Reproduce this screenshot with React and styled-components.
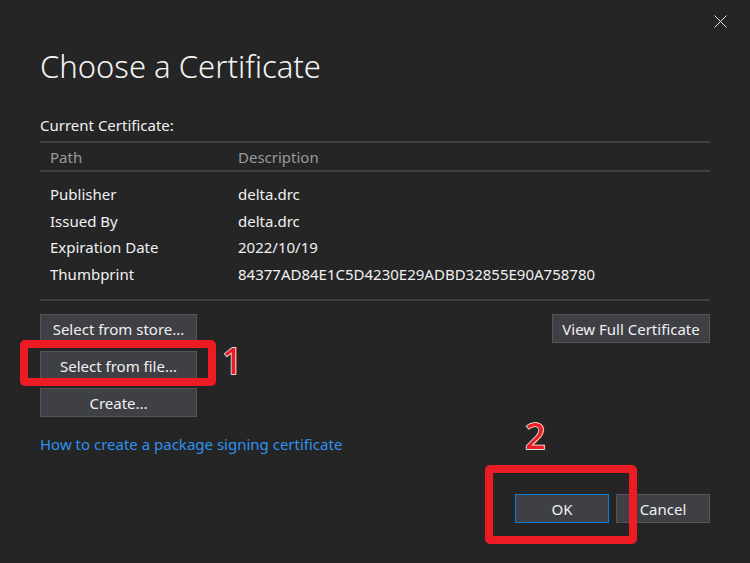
import styled, { createGlobalStyle } from 'styled-components';

const GlobalStyle = createGlobalStyle`
  html, body {
    margin: 0;
    padding: 0;
    background: #252526;
  }
  * { box-sizing: border-box; }
`;

const Dialog = styled.div`
  position: relative;
  width: 750px;
  height: 563px;
  background: #252526;
  color: #f1f1f1;
  font-family: "Segoe UI", "Noto Sans", "Liberation Sans", sans-serif;
  font-size: 15px;
  padding: 0 40px;
  display: flex;
  flex-direction: column;
  overflow: hidden;
`;

const TopBar = styled.div`
  height: 42px;
  display: flex;
  justify-content: flex-end;
  align-items: flex-start;
  margin-right: -18px;
  padding-top: 13px;
`;

const CloseButton = styled.button`
  width: 16px;
  height: 16px;
  padding: 0;
  border: 0;
  background: transparent;
  display: flex;
  align-items: center;
  justify-content: center;
  cursor: pointer;
`;

const Title = styled.h1`
  margin: 0;
  font-size: 31px;
  font-weight: 300;
  line-height: 48px;
  color: #f4f4f4;
`;

const Label = styled.div`
  margin-top: 25px;
  line-height: 20px;
`;

const Table = styled.div`
  margin-top: 6px;
  border-top: 2px solid #3f3f46;
  border-bottom: 2px solid #3f3f46;
`;

const Row = styled.div`
  display: grid;
  grid-template-columns: 188px 1fr;
  padding-left: 10px;
  height: ${(p) => (p.$header ? '29px' : '26.6px')};
  align-items: center;
  color: ${(p) => (p.$header ? '#9a9a9a' : '#f1f1f1')};
  border-bottom: ${(p) => (p.$header ? '2px solid #3f3f46' : '0')};
`;

const TableBody = styled.div`
  padding: 9px 0 12px;
`;

const Actions = styled.div`
  margin-top: 13px;
  display: flex;
  justify-content: space-between;
  align-items: flex-start;
`;

const ButtonStack = styled.div`
  display: flex;
  flex-direction: column;
  gap: 8px;
`;

const Button = styled.button`
  height: 29px;
  width: ${(p) => p.$width || 'auto'};
  padding: 0 8px;
  background: #3f3f46;
  border: 1px solid ${(p) => (p.$primary ? '#0e7fd6' : '#555558')};
  color: #f1f1f1;
  font-family: inherit;
  font-size: 15px;
  white-space: nowrap;
  cursor: pointer;
`;

const Link = styled.a`
  margin-top: 17px;
  align-self: flex-start;
  color: #2f91f0;
  text-decoration: none;
  line-height: 20px;
  cursor: pointer;
`;

const Footer = styled.div`
  margin-top: 40px;
  display: flex;
  justify-content: flex-end;
  gap: 7px;
`;

const Marker = styled.div`
  position: absolute;
  border: 8px solid #ed1c24;
  border-radius: 5px;
`;

const Step = styled.span`
  position: absolute;
  font-family: "Noto Sans", "Liberation Sans", sans-serif;
  font-size: 36px;
  font-weight: 500;
  line-height: 1;
  color: #ed1c24;
  -webkit-text-stroke: 1.5px #ffffff;
  paint-order: stroke fill;
`;

const rows = [
  ['Publisher', 'delta.drc'],
  ['Issued By', 'delta.drc'],
  ['Expiration Date', '2022/10/19'],
  ['Thumbprint', '84377AD84E1C5D4230E29ADBD32855E90A758780'],
];

export default function App() {
  return (
    <>
      <GlobalStyle />
      <Dialog>
        <TopBar>
          <CloseButton aria-label="Close">
            <svg width="13" height="13" viewBox="0 0 13 13">
              <path d="M0.5 0.5 L12.5 12.5 M12.5 0.5 L0.5 12.5" stroke="#e0e0e0" strokeWidth="1" />
            </svg>
          </CloseButton>
        </TopBar>
        <Title>Choose a Certificate</Title>
        <Label>Current Certificate:</Label>
        <Table>
          <Row $header>
            <span>Path</span>
            <span>Description</span>
          </Row>
          <TableBody>
            {rows.map(([k, v]) => (
              <Row key={k}>
                <span>{k}</span>
                <span>{v}</span>
              </Row>
            ))}
          </TableBody>
        </Table>
        <Actions>
          <ButtonStack>
            <Button $width="157px">Select from store...</Button>
            <Button $width="157px">Select from file...</Button>
            <Button $width="157px">Create...</Button>
          </ButtonStack>
          <Button $width="158px">View Full Certificate</Button>
        </Actions>
        <Link>How to create a package signing certificate</Link>
        <Footer>
          <Button $primary $width="94px">OK</Button>
          <Button $width="94px">Cancel</Button>
        </Footer>

        <Marker style={{ left: 20, top: 340, width: 196, height: 46 }} />
        <Step style={{ left: 222, top: 343 }}>1</Step>
        <Marker style={{ left: 485, top: 465, width: 152, height: 79 }} />
        <Step style={{ left: 525, top: 418 }}>2</Step>
      </Dialog>
    </>
  );
}
